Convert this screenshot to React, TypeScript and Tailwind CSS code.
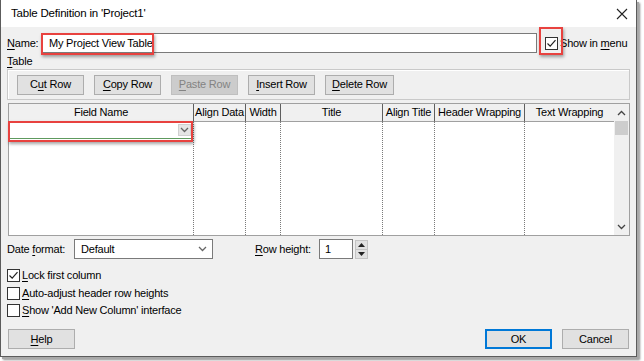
import React from 'react';

const U = ({ children }: { children: React.ReactNode }) => (
  <span className="underline decoration-1 underline-offset-[2px]">{children}</span>
);

type BtnProps = {
  children: React.ReactNode;
  disabled?: boolean;
  primary?: boolean;
  className?: string;
};

const Btn: React.FC<BtnProps> = ({ children, disabled, primary, className = '' }) => {
  let tone = 'bg-[#e1e1e1] border border-[#adadad] text-black';
  if (disabled) tone = 'bg-[#cccccc] border border-[#bfbfbf] text-[#838383]';
  if (primary) tone = 'bg-[#e1e1e1] border-2 border-[#0078d7] text-black';
  return (
    <div className={`h-[20px] w-[67px] flex items-center justify-center ${tone} ${className}`}>
      {children}
    </div>
  );
};

const Check = ({ checked }: { checked?: boolean }) => (
  <div className="w-[13px] h-[13px] bg-white border border-[#333333] flex items-center justify-center shrink-0">
    {checked && (
      <svg width="11" height="11" viewBox="0 0 11 11">
        <path d="M1.5 5.5 L4.2 8.2 L9.5 2.2" fill="none" stroke="#222" strokeWidth="1.2" />
      </svg>
    )}
  </div>
);

const Chevron = ({ up, color = '#555' }: { up?: boolean; color?: string }) => (
  <svg width="9" height="6" viewBox="0 0 9 6">
    <path
      d={up ? 'M1 5 L4.5 1.5 L8 5' : 'M1 1 L4.5 4.5 L8 1'}
      fill="none"
      stroke={color}
      strokeWidth="1.3"
    />
  </svg>
);

const columns = [
  { name: 'Field Name', w: 'w-[185px]' },
  { name: 'Align Data', w: 'w-[52px]' },
  { name: 'Width', w: 'w-[35px]' },
  { name: 'Title', w: 'w-[102px]' },
  { name: 'Align Title', w: 'w-[52px]' },
  { name: 'Header Wrapping', w: 'w-[90px]' },
];

const App: React.FC = () => {
  return (
    <div className="relative w-[644px] h-[361px] bg-white overflow-hidden font-['Liberation_Sans',Arial,sans-serif] text-[11px] tracking-[-0.2px] text-black leading-none">
      <div className="w-[637px] h-[357px] flex flex-col border border-[#5c5c5c] border-t-0 shadow-[2px_2px_0_#a8a8a8,3px_3px_2px_rgba(0,0,0,0.45)]">
        {/* Title bar */}
        <div className="h-[27px] bg-white flex items-center justify-between pl-[10px] pr-[8px]">
          <span className="text-[11.5px]">Table Definition in 'Project1'</span>
          <svg width="12" height="12" viewBox="0 0 12 12">
            <path d="M1 1 L11 11 M11 1 L1 11" stroke="#222" strokeWidth="1.1" />
          </svg>
        </div>

        {/* Body */}
        <div className="flex-1 bg-[#f0f0f0] flex flex-col px-[6px]">
          {/* Name row */}
          <div className="mt-[6px] h-[20px] flex items-center">
            <span className="w-[35px]">
              <U>N</U>ame:
            </span>
            <div className="w-[495px] h-[20px] bg-white border border-[#7a7a7a] flex items-center pl-[6px]">
              My Project View Table
            </div>
            <div className="ml-[8px] flex items-center gap-[2px]">
              <Check checked />
              <span>
                Show in <U>m</U>enu
              </span>
            </div>
          </div>

          {/* Table label */}
          <div className="h-[14px] flex items-end">
            <span>
              <U>T</U>able
            </span>
          </div>

          {/* Button group */}
          <div className="mt-[2px] h-[31px] border border-[#c9c9c9] shadow-[inset_1px_1px_0_#ffffff] flex items-center gap-[10px] pl-[9px]">
            <Btn>
              C<U>u</U>t Row
            </Btn>
            <Btn>
              <U>C</U>opy Row
            </Btn>
            <Btn disabled>
              <U>P</U>aste Row
            </Btn>
            <Btn>
              <U>I</U>nsert Row
            </Btn>
            <Btn className="w-[69px]">
              <U>D</U>elete Row
            </Btn>
          </div>

          {/* Grid */}
          <div className="mt-[3px] ml-[1px] h-[133px] border border-[#a0a0a0] bg-white flex">
            {columns.map((c, i) => (
              <div key={c.name} className={`${c.w} shrink-0 flex flex-col`}>
                <div className="h-[18px] bg-[#f0f0f0] border-b border-r border-b-[#a0a0a0] border-r-[#5e5e5e] flex items-center justify-center">
                  {c.name}
                </div>
                <div className="flex-1 border-r border-dotted border-[#7a7a7a] relative">
                  {i === 0 && (
                    <div className="h-[17px] border-b border-[#5e9a5e] flex items-center justify-end pr-[2px]">
                      <div className="w-[13px] h-[12px] bg-[#e5e5e5] border border-[#d0d0d0] flex items-center justify-center">
                        <Chevron color="#666" />
                      </div>
                    </div>
                  )}
                </div>
              </div>
            ))}
            <div className="flex-1 flex flex-col">
              <div className="h-[18px] bg-[#f0f0f0] border-b border-[#a0a0a0] flex items-center justify-center">
                Text Wrapping
              </div>
              <div className="flex-1" />
            </div>
            {/* Scrollbar */}
            <div className="w-[15px] bg-[#f0f0f0] flex flex-col items-center">
              <div className="h-[17px] flex items-center justify-center">
                <Chevron up color="#444" />
              </div>
              <div className="w-[13px] h-[14px] bg-[#cdcdcd]" />
              <div className="flex-1" />
              <div className="h-[17px] flex items-center justify-center">
                <Chevron color="#444" />
              </div>
            </div>
          </div>

          {/* Date format / Row height */}
          <div className="mt-[3px] h-[20px] flex items-center">
            <span className="w-[67px]">
              Date <U>f</U>ormat:
            </span>
            <div className="w-[139px] h-[20px] bg-white border border-[#7a7a7a] flex items-center justify-between pl-[6px] pr-[5px]">
              <span>Default</span>
              <Chevron color="#666" />
            </div>
            <span className="ml-[42px] w-[64px]">
              <U>R</U>ow height:
            </span>
            <div className="w-[34px] h-[20px] bg-white border border-[#7a7a7a] flex items-center pl-[5px]">
              1
            </div>
            <div className="ml-[2px] w-[13px] h-[19px] bg-[#e1e1e1] border border-[#c4c4c4] flex flex-col">
              <div className="flex-1 flex items-center justify-center border-b border-[#c4c4c4]">
                <svg width="7" height="4" viewBox="0 0 7 4">
                  <path d="M0 4 L3.5 0 L7 4 Z" fill="#222" />
                </svg>
              </div>
              <div className="flex-1 flex items-center justify-center">
                <svg width="7" height="4" viewBox="0 0 7 4">
                  <path d="M0 0 L3.5 4 L7 0 Z" fill="#222" />
                </svg>
              </div>
            </div>
          </div>

          {/* Checkboxes */}
          <div className="mt-[10px] flex flex-col gap-[4.5px]">
            <div className="h-[13px] flex items-center gap-[2px]">
              <Check checked />
              <span>
                <U>L</U>ock first column
              </span>
            </div>
            <div className="h-[13px] flex items-center gap-[2px]">
              <Check />
              <span>
                <U>A</U>uto-adjust header row heights
              </span>
            </div>
            <div className="h-[13px] flex items-center gap-[2px]">
              <Check />
              <span>
                <U>S</U>how 'Add New Column' interface
              </span>
            </div>
          </div>

          {/* Bottom buttons */}
          <div className="mt-[12px] flex items-center">
            <Btn className="ml-[1px]">
              <U>H</U>elp
            </Btn>
            <div className="flex-1" />
            <Btn primary>OK</Btn>
            <Btn className="ml-[10px] mr-[1px]">Cancel</Btn>
          </div>
        </div>
      </div>

      {/* Red annotation boxes */}
      <div className="absolute left-[41px] top-[33px] w-[113px] h-[22px] border-2 border-[#e8423f] shadow-[1px_2px_3px_rgba(0,0,0,0.35)]" />
      <div className="absolute left-[539px] top-[27px] w-[24px] h-[28px] border-2 border-[#e8423f] shadow-[1px_2px_3px_rgba(0,0,0,0.35)]" />
      <div className="absolute left-[8px] top-[121px] w-[185px] h-[21px] border-2 border-[#e8423f] shadow-[1px_2px_3px_rgba(0,0,0,0.35)]" />
    </div>
  );
};

export default App;
